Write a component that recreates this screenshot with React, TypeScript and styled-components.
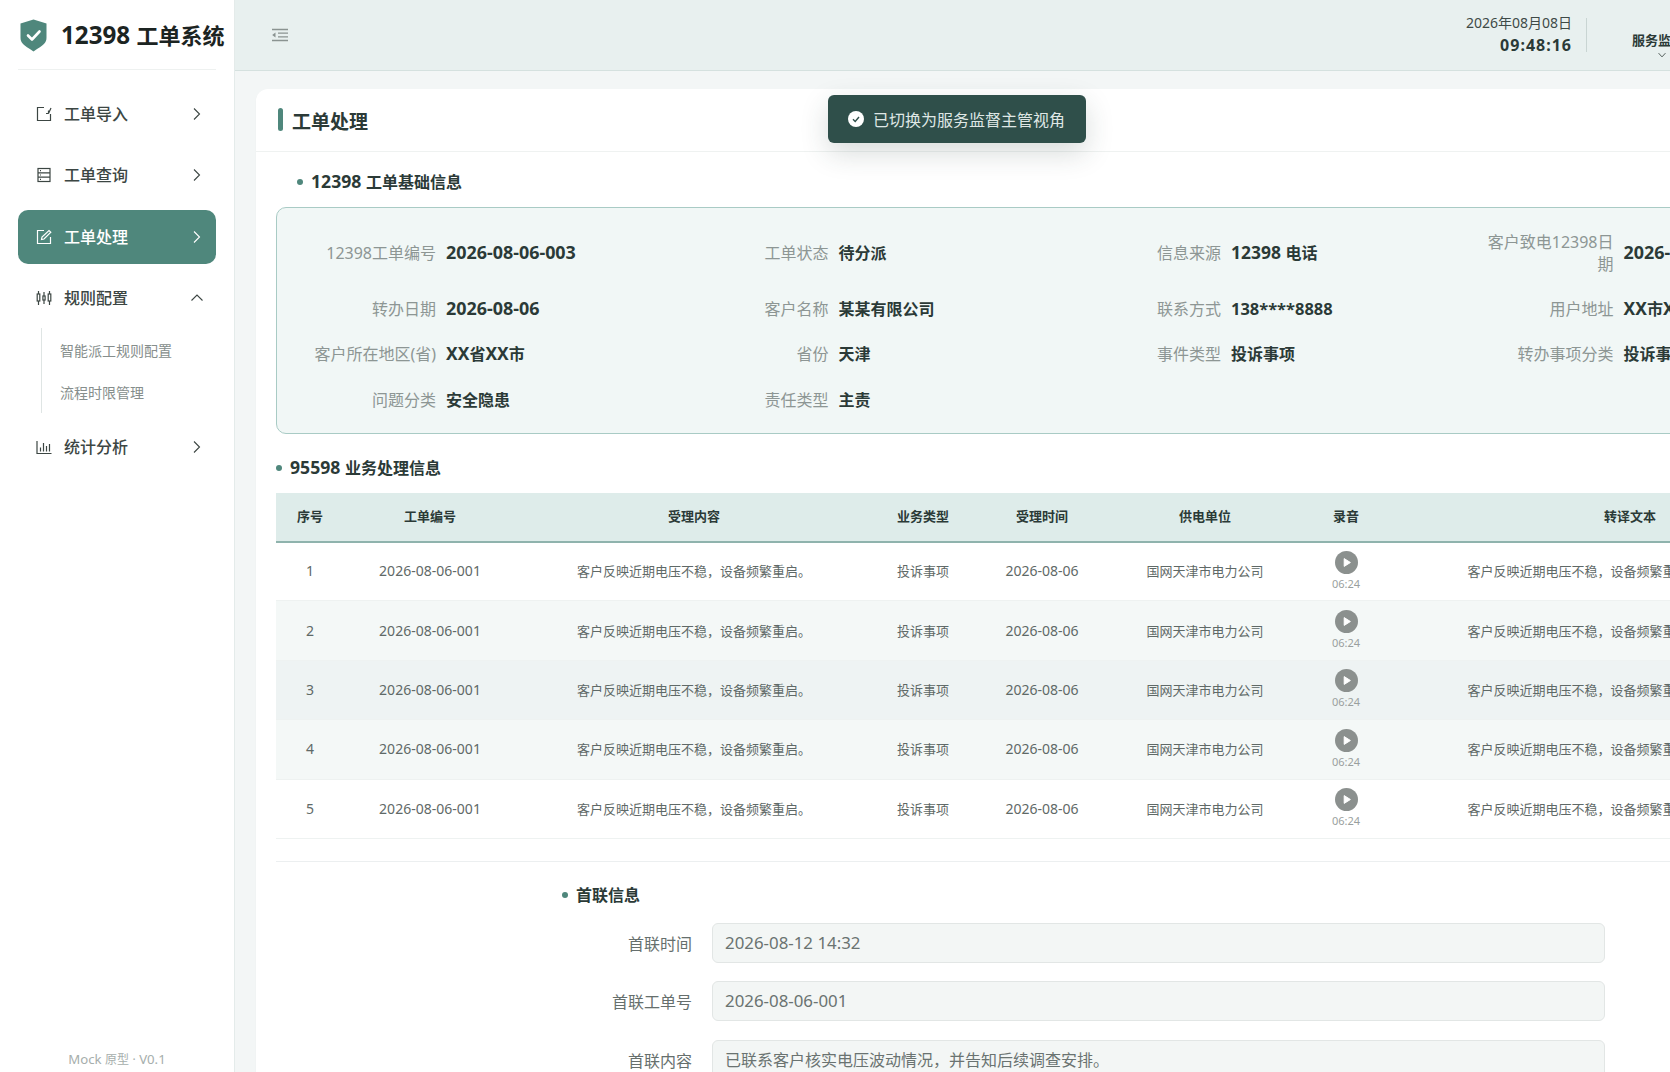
import React from "react";
import styled, { createGlobalStyle } from "styled-components";

const FONT = `"Noto Sans", "Noto Sans CJK SC", sans-serif`;

const Global = createGlobalStyle`
  html, body { margin: 0; padding: 0; height: 100%; overflow: hidden; }
  body { font-family: ${FONT}; background: #f3f6f6; color: #2b3a37; }
  * { box-sizing: border-box; }
`;

const Shell = styled.div`
  display: flex;
  width: 1670px;
  height: 1072px;
  overflow: hidden;
  position: relative;
`;

const Sidebar = styled.aside`
  flex: 0 0 235px;
  height: 100%;
  background: #fff;
  border-right: 1px solid #e4ebea;
  padding: 0 18px;
  display: flex;
  flex-direction: column;
`;

const Brand = styled.div`
  height: 70px;
  display: flex;
  align-items: center;
  gap: 14px;
  margin-left: 2px;
  margin-right: -12px;
  white-space: nowrap;
`;

const BrandName = styled.div`
  font-size: 22px;
  font-weight: 700;
  color: #1c2422;
  padding-bottom: 2px;
`;

const BrandRule = styled.div`
  height: 1px;
  background: #eef1f0;
  margin-top: -1px;
`;

const Nav = styled.nav`
  display: flex;
  flex-direction: column;
  margin-top: 17px;
  flex: 1;
`;

const NavItem = styled.div<{ $active?: boolean }>`
  height: 54px;
  flex: 0 0 54px;
  margin-bottom: 7.3px;
  border-radius: 10px;
  padding: 0 11px 0 18px;
  display: flex;
  align-items: center;
  gap: 12px;
  font-size: 16px;
  font-weight: 500;
  background: ${(p) => (p.$active ? "#4f877c" : "transparent")};
  color: ${(p) => (p.$active ? "#fff" : "#3c4643")};
`;

const NavLabel = styled.span`
  flex: 1;
  padding-bottom: 2px;
`;

const SubMenu = styled.div`
  margin: -4px 0 7px 23px;
  padding: 2px 0 0 18px;
  border-left: 1px solid #dfe5e4;
  height: 85px;
  display: flex;
  flex-direction: column;
`;

const SubItem = styled.div`
  height: 42px;
  flex: 0 0 42px;
  line-height: 42px;
  font-size: 14px;
  color: #868e8c;
`;

const SideFoot = styled.div`
  height: 26px;
  margin-bottom: -1px;
  text-align: center;
  font-size: 12px;
  color: #a6aeac;
  line-height: 26px;
`;

const Main = styled.main`
  flex: 1;
  min-width: 0;
  display: flex;
  flex-direction: column;
`;

const Header = styled.header`
  height: 71px;
  flex: 0 0 71px;
  background: #e8f0ef;
  border-bottom: 1px solid #d5e1df;
  padding: 0 0 0 36px;
  display: flex;
  align-items: center;
  color: #8a9391;
`;

const HeaderSpacer = styled.div`
  flex: 1;
`;

const Clock = styled.div`
  text-align: right;
  line-height: 22px;
  padding-bottom: 3px;
`;

const ClockDate = styled.div`
  font-size: 14px;
  color: #3e4a47;
`;

const ClockTime = styled.div`
  font-size: 16px;
  font-weight: 700;
  letter-spacing: 1px;
  color: #2b3a37;
`;

const HeaderRule = styled.div`
  width: 1px;
  height: 34px;
  background: #c9d5d3;
  margin: 0 45px 0 14px;
`;

const Role = styled.div`
  width: 60px;
  display: flex;
  flex-direction: column;
  align-items: center;
  margin-right: -22px;
  color: #55605d;
  padding-top: 20px;
`;

const RoleName = styled.div`
  width: 60px;
  font-size: 13px;
  font-weight: 600;
  line-height: 20px;
  white-space: nowrap;
  color: #2b3a37;
`;

const Page = styled.div`
  flex: 1;
  width: 1654px;
  margin: 18px 0 0 21px;
`;

const Card = styled.section`
  width: 100%;
  background: #fff;
  border-radius: 12px 12px 0 0;
  min-height: 1000px;
  box-shadow: 0 1px 2px rgba(60, 90, 85, 0.03);
`;

const CardHead = styled.div`
  height: 63px;
  border-bottom: 1px solid #eff2f1;
  display: flex;
  align-items: center;
  padding: 0 22px;
  gap: 9px;
`;

const AccentBar = styled.span`
  width: 5px;
  height: 23px;
  border-radius: 3px;
  background: #4f877c;
  margin-top: -2px;
`;

const CardTitle = styled.h1`
  margin: 0;
  font-size: 19px;
  font-weight: 700;
  color: #2b3a37;
  line-height: 26px;
  padding-top: 3px;
`;

const CardBody = styled.div`
  padding: 0 20px;
`;

const SectionTitle = styled.h2<{ $indent?: number }>`
  margin: 0;
  padding-left: ${(p) => p.$indent ?? 0}px;
  display: flex;
  align-items: center;
  gap: 8px;
  font-size: 16px;
  font-weight: 700;
  color: #2b3a37;
  line-height: 24px;
  height: 24px;
`;

const Dot = styled.span`
  width: 6px;
  height: 6px;
  border-radius: 50%;
  background: #4f877c;
  flex: none;
`;

const BasicTitleWrap = styled.div`
  padding-top: 18px;
  margin-bottom: 13px;
`;

const InfoBox = styled.div`
  border: 1px solid #a9cbc5;
  border-radius: 10px;
  background: #f1f7f6;
  padding: 23px 21px 21px;
  display: grid;
  grid-template-columns: repeat(4, 1fr);
  row-gap: 21.5px;
`;

const Field = styled.div`
  display: flex;
  align-items: center;
  gap: 10px;
  min-height: 24px;
`;

const FieldLabel = styled.div`
  flex: 0 0 138px;
  text-align: right;
  font-size: 16px;
  line-height: 22px;
  color: #8d9694;
`;

const FieldValue = styled.div`
  font-size: 16px;
  font-weight: 700;
  color: #2b3a37;
  white-space: nowrap;
  line-height: 24px;
`;

const BizTitleWrap = styled.div`
  padding-top: 22px;
  margin-bottom: 13px;
`;

const Table = styled.table`
  width: 1592px;
  border-collapse: collapse;
  table-layout: fixed;
`;

const Th = styled.th`
  height: 49px;
  padding: 0 0 2px;
  background: #deecea;
  border-bottom: 2px solid #8fb3ad;
  font-size: 13px;
  font-weight: 700;
  color: #2b3a37;
  text-align: center;
`;

const Row = styled.tr<{ $tone: 0 | 1 | 2 }>`
  background: ${(p) => ["#ffffff", "#f4f8f7", "#eef3f3"][p.$tone]};
`;

const Td = styled.td`
  height: 59.4px;
  padding: 0;
  border-bottom: 1px solid #eef2f1;
  font-size: 13px;
  line-height: 18px;
  color: #5f6967;
  text-align: center;
  white-space: nowrap;
`;

const Audio = styled.div`
  display: flex;
  flex-direction: column;
  align-items: center;
  gap: 3px;
  margin-top: -1px;
`;

const AudioTime = styled.span`
  font-size: 11px;
  line-height: 14px;
  color: #9a9f9e;
`;

const Divider = styled.div`
  height: 1px;
  background: #eceff0;
  margin-top: 22px;
`;

const FormWrap = styled.div`
  width: 1067px;
  margin: 21px 0 0 262px;
`;

const FormRow = styled.div`
  display: flex;
  align-items: center;
  height: 40px;
  margin-bottom: 18.5px;
`;

const FormLabel = styled.div`
  flex: 0 0 154px;
  margin-right: 20px;
  text-align: right;
  font-size: 16px;
  color: #666f6d;
`;

const FormValue = styled.div`
  flex: 1;
  height: 40px;
  line-height: 38px;
  border: 1px solid #e2e6e5;
  border-radius: 6px;
  background: #f3f6f5;
  padding: 0 12px;
  font-size: 16px;
  color: #6a7371;
`;

const FormHead = styled.div`
  margin-bottom: 16px;
`;

const Toast = styled.div`
  position: absolute;
  left: 828px;
  top: 95px;
  width: 258px;
  height: 48px;
  border-radius: 6px;
  background: #2f4f4a;
  color: #dfe7e5;
  font-size: 16px;
  display: flex;
  align-items: center;
  gap: 9px;
  padding-left: 20px;
  box-shadow: 0 10px 28px rgba(40, 60, 56, 0.18);
`;

const Latin = styled.span<{ $scale: number }>`
  font-size: ${(p) => p.$scale}em;
  line-height: 1;
`;

const Txt = ({ s, children }: { s: number; children: string }) => (
  <>
    {children.split(/([\x20-\x7e]+)/).map((part, i) =>
      i % 2 === 1 ? <Latin key={i} $scale={s}>{part}</Latin> : part
    )}
  </>
);

const ShieldLogo = () => (
  <svg width="27" height="33" viewBox="0 0 27 33" style={{ flex: "none" }}>
    <path d="M13.5 0.5 L26.5 4.5 V18.5 C26.5 24 24 25.5 13.5 32.5 C3 25.5 0.5 24 0.5 18.5 V4.5 Z" fill="#4f877c" />
    <path d="M8 16.5 L12 20.5 L19.5 12.5" fill="none" stroke="#fff" strokeWidth="2.6" strokeLinecap="round" strokeLinejoin="round" />
  </svg>
);

const Ic = ({ children }: { children: React.ReactNode }) => (
  <svg width="16" height="16" viewBox="0 0 16 16" fill="none" stroke="currentColor" strokeWidth="1.2" style={{ flex: "none" }}>
    {children}
  </svg>
);

const ImportIcon = () => (
  <Ic>
    <path d="M8 1.5H1.5v13h13V8" />
    <path d="M10 7.5h2.5M12.5 4.5v3M12.5 7.5 15 2" />
  </Ic>
);
const ListIcon = () => (
  <Ic>
    <rect x="2" y="1.5" width="12" height="13" />
    <path d="M2 5.8h12M2 10.2h12M4 3.7h1M4 8h1M4 12.4h1" />
  </Ic>
);
const EditIcon = () => (
  <Ic>
    <path d="M8 1.5H1.5v13h13V8" />
    <path d="M5.5 10.5 6 8l7-6.5 1.8 1.8L8 10z" />
  </Ic>
);
const RulesIcon = () => (
  <Ic>
    <path d="M2.5 1v14M8 2v12M13.5 1v14" />
    <rect x="1.2" y="4" width="2.6" height="7" fill="#fff" />
    <rect x="6.9" y="6" width="2.2" height="4" fill="#fff" />
    <rect x="12.2" y="4" width="2.6" height="7" fill="#fff" />
  </Ic>
);
const ChartIcon = () => (
  <Ic>
    <path d="M1 2v12.5h14.5" />
    <path d="M4.5 12.5v-4M7.5 12.5V4M10.5 12.5V7M13.5 12.5V5" />
  </Ic>
);
const Chev = ({ dir, size = 16 }: { dir: "right" | "up" | "down"; size?: number }) => (
  <svg width={size} height={size} viewBox="0 0 16 16" fill="none" stroke="currentColor" strokeWidth={size < 16 ? 1.6 : 1.1} style={{ flex: "none" }}>
    {dir === "right" && <path d="M5 2.5 10.5 8 5 13.5" />}
    {dir === "up" && <path d="M2.5 10.5 8 5l5.5 5.5" />}
    {dir === "down" && <path d="M2.5 5 8 11l5.5-6" />}
  </svg>
);
const OutdentIcon = () => (
  <svg width="18" height="16" viewBox="0 0 18 16" fill="none" stroke="currentColor" strokeWidth="1.3">
    <path d="M1 2.5h16M7 6.2h10M7 9.8h10M1 13.5h16" />
    <path d="M4.5 5.5v5L1.2 8z" fill="currentColor" stroke="none" />
  </svg>
);
const PlayIcon = () => (
  <svg width="23" height="23" viewBox="0 0 23 23">
    <circle cx="11.5" cy="11.5" r="11.5" fill="#8b908e" />
    <path d="M9.2 7.6 L15.4 11.5 L9.2 15.4 Z" fill="#fff" stroke="#fff" strokeWidth="1" strokeLinejoin="round" />
  </svg>
);
const ToastCheck = () => (
  <svg width="16" height="16" viewBox="0 0 16 16">
    <circle cx="8" cy="8" r="8" fill="#fff" />
    <path d="M5 8.2 7.2 10.4 11 6" fill="none" stroke="#2f4f4a" strokeWidth="1.4" />
  </svg>
);

const fields: [string, string][] = [
  ["12398工单编号", "2026-08-06-003"],
  ["工单状态", "待分派"],
  ["信息来源", "12398 电话"],
  ["客户致电12398日期", "2026-08-06"],
  ["转办日期", "2026-08-06"],
  ["客户名称", "某某有限公司"],
  ["联系方式", "138****8888"],
  ["用户地址", "XX市XX区"],
  ["客户所在地区(省)", "XX省XX市"],
  ["省份", "天津"],
  ["事件类型", "投诉事项"],
  ["转办事项分类", "投诉事项"],
  ["问题分类", "安全隐患"],
  ["责任类型", "主责"],
];

const columns: [string, number][] = [
  ["序号", 68],
  ["工单编号", 172],
  ["受理内容", 356],
  ["业务类型", 102],
  ["受理时间", 136],
  ["供电单位", 190],
  ["录音", 92],
  ["转译文本", 476],
];

const CONTENT = "客户反映近期电压不稳，设备频繁重启。";
const TRANSCRIPT = "客户反映近期电压不稳，设备频繁重启，希望尽快处理。";
const tones: (0 | 1 | 2)[] = [0, 1, 2, 1, 0];

const valueScale = (v: string) => (v.includes("-") ? 1.12 : v.includes("*") ? 1.03 : 1.09);

export default function App() {
  return (
    <Shell>
      <Global />
      <Sidebar>
        <Brand>
          <ShieldLogo />
          <BrandName><Txt s={1.1}>12398 工单系统</Txt></BrandName>
        </Brand>
        <BrandRule />
        <Nav>
          <NavItem><ImportIcon /><NavLabel>工单导入</NavLabel><Chev dir="right" /></NavItem>
          <NavItem><ListIcon /><NavLabel>工单查询</NavLabel><Chev dir="right" /></NavItem>
          <NavItem $active><EditIcon /><NavLabel>工单处理</NavLabel><Chev dir="right" /></NavItem>
          <NavItem><RulesIcon /><NavLabel>规则配置</NavLabel><Chev dir="up" /></NavItem>
          <SubMenu>
            <SubItem>智能派工规则配置</SubItem>
            <SubItem>流程时限管理</SubItem>
          </SubMenu>
          <NavItem><ChartIcon /><NavLabel>统计分析</NavLabel><Chev dir="right" /></NavItem>
        </Nav>
        <SideFoot><Txt s={1.1}>Mock 原型 · V0.1</Txt></SideFoot>
      </Sidebar>
      <Main>
        <Header>
          <OutdentIcon />
          <HeaderSpacer />
          <Clock>
            <ClockDate>2026年08月08日</ClockDate>
            <ClockTime>09:48:16</ClockTime>
          </Clock>
          <HeaderRule />
          <Role>
            <RoleName>服务监督主管</RoleName>
            <Chev dir="down" size={10} />
          </Role>
        </Header>
        <Page>
          <Card>
            <CardHead>
              <AccentBar />
              <CardTitle>工单处理</CardTitle>
            </CardHead>
            <CardBody>
              <BasicTitleWrap>
                <SectionTitle $indent={21}><Dot /><span><Txt s={1.1}>12398 工单基础信息</Txt></span></SectionTitle>
              </BasicTitleWrap>
              <InfoBox>
                {fields.map(([k, v]) => (
                  <Field key={k}>
                    <FieldLabel>{k}</FieldLabel>
                    <FieldValue><Txt s={valueScale(v)}>{v}</Txt></FieldValue>
                  </Field>
                ))}
              </InfoBox>
              <BizTitleWrap>
                <SectionTitle><Dot /><span><Txt s={1.1}>95598 业务处理信息</Txt></span></SectionTitle>
              </BizTitleWrap>
              <Table>
                <colgroup>
                  {columns.map(([n, w]) => <col key={n} width={w} />)}
                </colgroup>
                <thead>
                  <tr>{columns.map(([n]) => <Th key={n}>{n}</Th>)}</tr>
                </thead>
                <tbody>
                  {tones.map((t, i) => (
                    <Row key={i} $tone={t}>
                      <Td><Txt s={1.08}>{String(i + 1)}</Txt></Td>
                      <Td><Txt s={1.08}>2026-08-06-001</Txt></Td>
                      <Td>{CONTENT}</Td>
                      <Td>投诉事项</Td>
                      <Td><Txt s={1.08}>2026-08-06</Txt></Td>
                      <Td>国网天津市电力公司</Td>
                      <Td>
                        <Audio><PlayIcon /><AudioTime>06:24</AudioTime></Audio>
                      </Td>
                      <Td>{TRANSCRIPT}</Td>
                    </Row>
                  ))}
                </tbody>
              </Table>
              <Divider />
              <FormWrap>
                <FormHead>
                  <SectionTitle $indent={24}><Dot />首联信息</SectionTitle>
                </FormHead>
                <FormRow><FormLabel>首联时间</FormLabel><FormValue><Txt s={1.055}>2026-08-12 14:32</Txt></FormValue></FormRow>
                <FormRow><FormLabel>首联工单号</FormLabel><FormValue><Txt s={1.055}>2026-08-06-001</Txt></FormValue></FormRow>
                <FormRow><FormLabel>首联内容</FormLabel><FormValue>已联系客户核实电压波动情况，并告知后续调查安排。</FormValue></FormRow>
              </FormWrap>
            </CardBody>
          </Card>
        </Page>
      </Main>
      <Toast><ToastCheck />已切换为服务监督主管视角</Toast>
    </Shell>
  );
}
